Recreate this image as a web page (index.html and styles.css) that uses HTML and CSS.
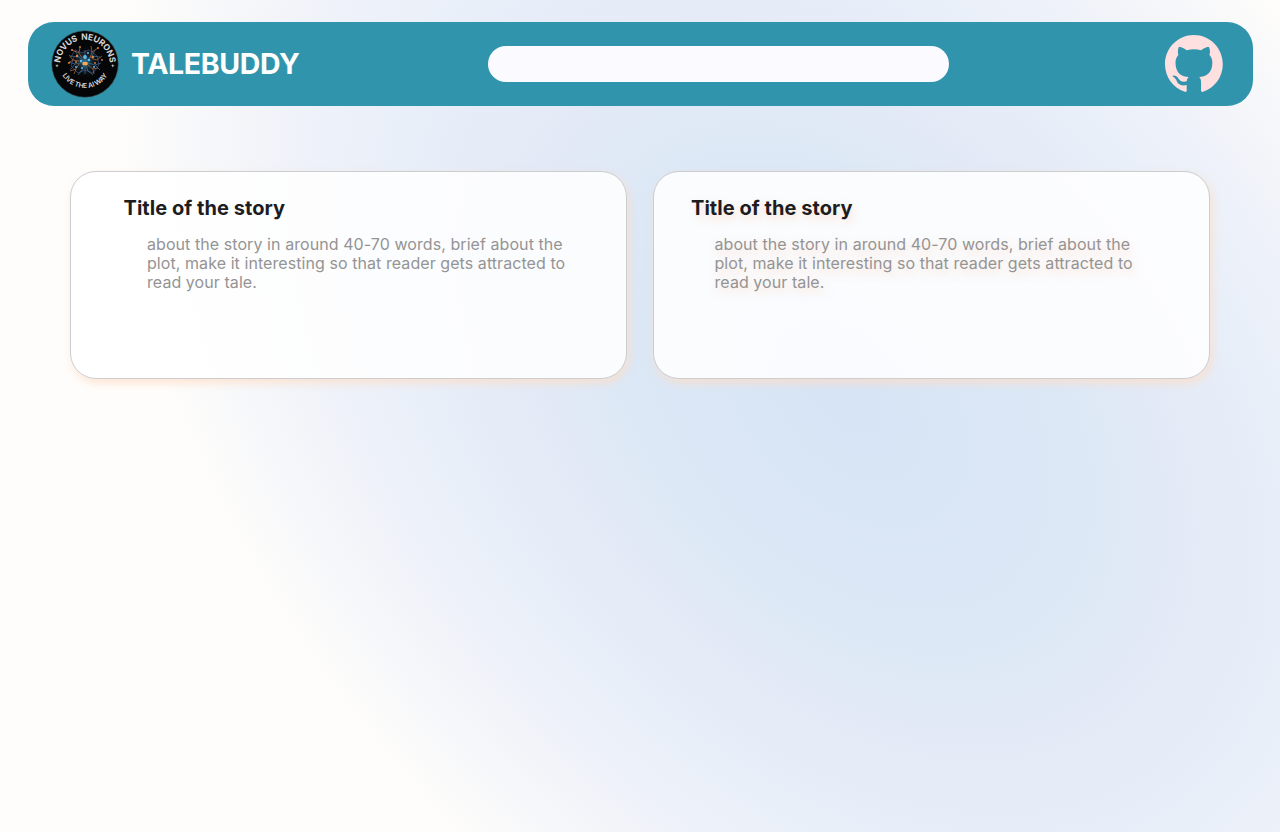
FILE: index.html
```html
<!DOCTYPE html>
<html lang="en">
<head>
<meta charset="utf-8">
<title>Talebuddy</title>
<link rel="stylesheet" href="styles.css">
</head>
<body class="page">
<svg class="backdrop" viewBox="0 0 1280 832" preserveAspectRatio="none">
  <defs>
    <radialGradient id="glow" gradientUnits="userSpaceOnUse" cx="0" cy="0" r="1" gradientTransform="translate(848 402) rotate(47) scale(875 588)">
      <stop offset="0" stop-color="#d7e4f5"/><stop offset=".16" stop-color="#d9e6f5"/><stop offset=".31" stop-color="#dce8f6"/><stop offset=".47" stop-color="#e4eaf6"/><stop offset=".62" stop-color="#e9eff9"/><stop offset=".75" stop-color="#eff2f9"/><stop offset="1" stop-color="#fefdfb"/>
    </radialGradient>
  </defs>
  <rect width="1280" height="832" fill="url(#glow)"/>
</svg>
<header class="navbar">
  <svg class="logo" viewBox="0 0 68 68">
    <defs>
      <path id="arc-top" d="M9.200 34.500a24.800 24.800 0 0 1 49.600 0"/>
      <path id="arc-bottom" d="M7.500 31.500a26.500 26.500 0 0 0 53 0"/>
      <radialGradient id="core"><stop offset="0" stop-color="#48a6d8" stop-opacity=".7"/><stop offset=".4" stop-color="#29506c" stop-opacity=".5"/><stop offset="1" stop-color="#111" stop-opacity="0"/></radialGradient>
    </defs>
    <circle cx="34" cy="34" r="33.3" fill="#050607" stroke="#3c6265" stroke-width=".6"/>
    <circle cx="34" cy="32" r="16" fill="url(#core)"/>
    <g fill="none" stroke-width=".7">
      <path stroke="#4a4d80" d="M23 27l-3 9 7 7 7-3 8 3 6-8-2-9-8-6-7 3-7-3-4 7"/>
      <path stroke="#3e7495" d="M34 32l-6-5-9-1m9 1-4-6m10 11 7-6 8 1m-8-1 3-6m-10 12-10 2-5 6m5-6-6-2m16 0 10 3 5 5m-5-5 6-2m-16-1-3 8-4 5m7-13 3 9 5 4m-8-13v12m0-12V20"/>
      <path stroke="#b46f43" d="M31 28l-3-5-7-3m7 3 1-6m10 11 2-6 6-4m-6 4-1-6m-12 15-6-1-5 3m5-3-4-5m28 5-4-1-2-2m6 3 5-4m-23 8-3 5-6 2m6-2-2 5m14-9 5 4 5-1m-5 1 1 5"/>
    </g>
    <g fill="#df8545"><circle cx="21" cy="20" r="1"/><circle cx="29" cy="17" r=".9"/><circle cx="47" cy="18" r="1"/><circle cx="26" cy="26" r="1.200"/><circle cx="42" cy="27" r="1.200"/><circle cx="18" cy="33" r=".9"/><circle cx="51" cy="30" r=".9"/><circle cx="25" cy="32" r=".9"/><circle cx="44" cy="33" r=".9"/><rect x="31.500" y="32" width="5.200" height="3.200" rx="1" fill="#f5ac55"/></g>
    <g fill="#63bce8"><circle cx="34" cy="27" r="1.900"/><circle cx="30" cy="31" r="1.300"/><circle cx="38" cy="30" r="1.300"/><circle cx="25" cy="37" r="1"/><circle cx="43" cy="37" r="1"/><circle cx="31" cy="38" r="1"/><circle cx="37" cy="23" r="1"/></g>
    <text class="logo-top"><textPath href="#arc-top" startOffset="50%" text-anchor="middle" textLength="74">NOVUS&#160; NEURONS</textPath></text>
    <text class="logo-bottom"><textPath href="#arc-bottom" startOffset="50%" text-anchor="middle" textLength="54">LIVE THE AI WAY</textPath></text>
    <path fill="#ccc" d="M6 34l.5 1.300 1.300.5-1.300.5L6 37.600l-.5-1.300-1.300-.5 1.300-.5zM61.800 34l.5 1.300 1.300.5-1.300.5-.5 1.300-.5-1.300-1.300-.5 1.300-.5z"/>
  </svg>
  <h1 class="brand">TALEBUDDY</h1>
  <input class="search" type="text" aria-label="Search">
  <svg class="github" viewBox="0 0 98 96"><path fill="#ffe0e0" fill-rule="evenodd" d="M48.854 0C21.839 0 0 22 0 49.217c0 21.756 13.993 40.172 33.405 46.690 2.427.490 3.316-1.059 3.316-2.362 0-1.141-.080-5.052-.080-9.127-13.590 2.934-16.420-5.867-16.420-5.867-2.184-5.704-5.420-7.170-5.420-7.170-4.448-3.015.324-3.015.324-3.015 4.934.326 7.523 5.052 7.523 5.052 4.367 7.496 11.404 5.378 14.235 4.074.404-3.178 1.699-5.378 3.074-6.600-10.839-1.141-22.243-5.378-22.243-24.283 0-5.378 1.940-9.778 5.014-13.200-.485-1.222-2.184-6.275.486-13.038 0 0 4.125-1.304 13.426 5.052a46.970 46.970 0 0 1 12.214-1.630c4.125 0 8.330.571 12.213 1.630 9.302-6.356 13.427-5.052 13.427-5.052 2.670 6.763.970 11.816.485 13.038 3.155 3.422 5.015 7.822 5.015 13.200 0 18.905-11.404 23.060-22.324 24.283 1.780 1.548 3.316 4.481 3.316 9.126 0 6.600-.080 11.897-.080 13.526 0 1.304.890 2.853 3.316 2.364 19.412-6.520 33.405-24.935 33.405-46.691C97.707 22 75.788 0 48.854 0z"/></svg>
</header>
<main class="stories">
  <article class="card">
    <h2 class="title">Title of the story</h2>
    <p class="summary">about the story in around 40-70 words, brief about the plot, make it interesting so that reader gets attracted to read your tale.</p>
  </article>
  <article class="card card-soft">
    <h2 class="title">Title of the story</h2>
    <p class="summary">about the story in around 40-70 words, brief about the plot, make it interesting so that reader gets attracted to read your tale.</p>
  </article>
</main>
</body>
</html>
```
FILE: styles.css
```css
* { box-sizing: border-box; }
.page {
  margin: 0;
  height: 832px;
  padding: 22px 27px 0 28px;
  position: relative;
  overflow: hidden;
  background: #fefdfb;
  font-family: Inter, "Liberation Sans", sans-serif;
}
/* tilted elliptical glow behind the content */
.backdrop {
  position: absolute;
  z-index: -1;
  inset: 0;
  width: 100%;
  height: 100%;
}
.navbar {
  height: 84px;
  display: flex;
  align-items: center;
  padding: 0 30px 0 23px;
  border-radius: 26px;
  background: #3095ac;
}
.logo { width: 68px; height: 68px; flex: none; }
.logo text { font-family: Inter, sans-serif; fill: #d5d7da; }
.logo-top { font-size: 8.500px; font-weight: 700; }
.logo-bottom { font-size: 6.800px; font-weight: 600; }
.brand {
  width: 357px;
  margin: 0 0 0 12px;
  color: #fff;
  font-size: 28.500px;
  letter-spacing: -.35px;
  line-height: 36px;
  font-weight: 700;
}
.search {
  width: 461px;
  height: 36px;
  padding: 0 18px;
  border: 0;
  border-radius: 18px;
  background: #fbfbff;
}
.github { width: 58px; height: 57px; margin: 0 0 1px auto; }
.stories {
  display: grid;
  grid-template-columns: 557px 557px;
  column-gap: 26px;
  padding: 65px 0 0 42px;
}
.card {
  height: 208px;
  padding: 24px 50px 0 52.500px;
  border: 1px solid #cccdd0;
  border-radius: 26px;
  background: rgba(255, 255, 255, .85);
  box-shadow: 2px 4px 8px rgba(255, 220, 196, .75);
}
.card-soft {
  padding-left: 37px;
  text-shadow: 2px 4px 8px rgba(255, 205, 175, .5);
}
.title {
  margin: 0;
  color: #1d1d1f;
  font-size: 20px;
  letter-spacing: .05px;
  line-height: 24px;
  font-weight: 700;
}
.summary {
  width: 430px;
  margin: 15px 0 0 23.500px;
  color: #949494;
  font-size: 16px;
  letter-spacing: .07px;
  line-height: 19px;
}
```
